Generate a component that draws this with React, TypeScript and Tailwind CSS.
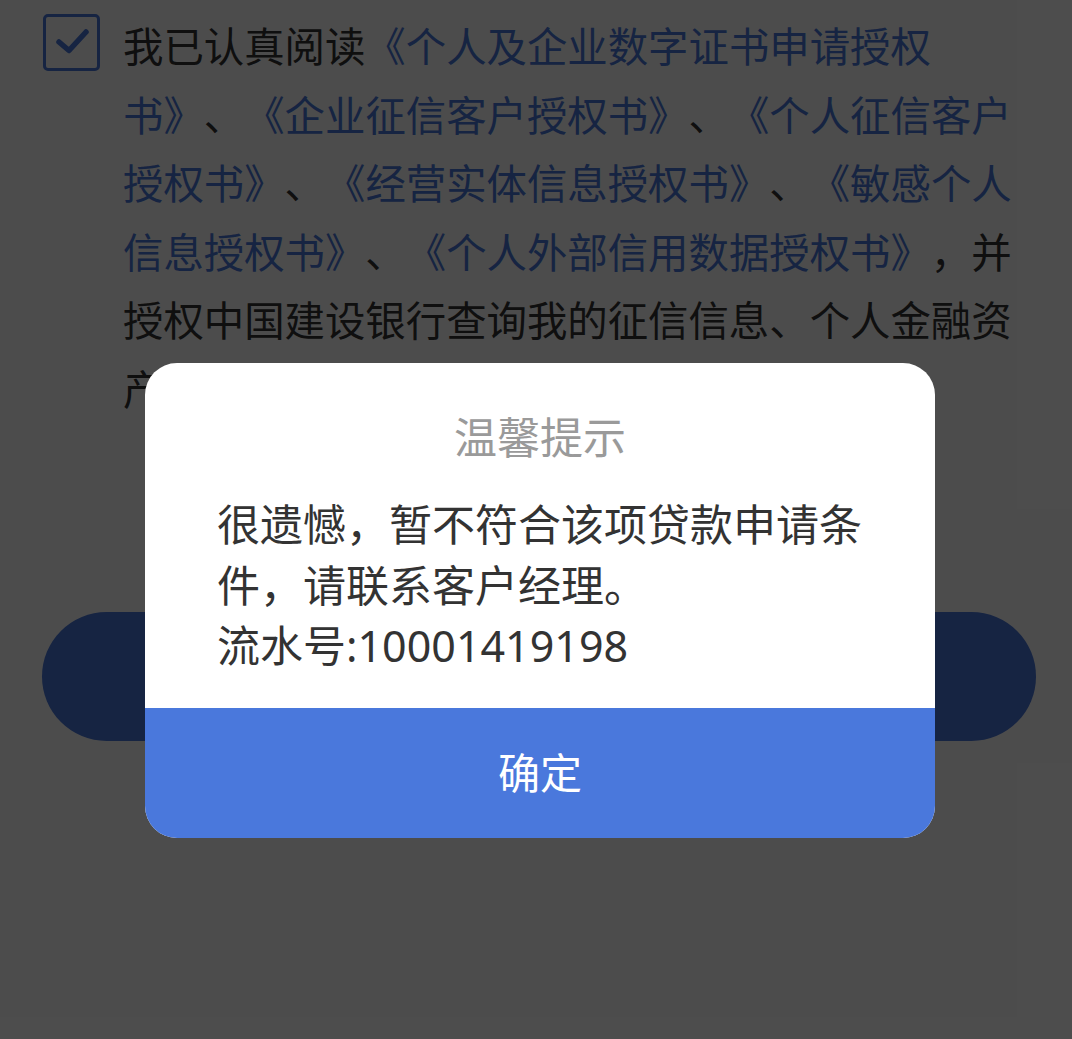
import React from "react";

const links = {
  color: "text-[#4a78dc]",
};

// 背景页：授权协议勾选 + 主按钮
const AgreementPage: React.FC = () => {
  return (
    <div className="pt-[13px]">
      <div className="flex items-start">
        {/* 勾选框 */}
        <div className="ml-[43px] mt-[1px] flex h-[57px] w-[57px] shrink-0 items-center justify-center rounded-[5px] border-[3px] border-[#4a78dc]">
          <svg width="40" height="40" viewBox="0 0 40 40" fill="none">
            <path
              d="M7 19 L17 27.5 L34 9"
              stroke="#4a78dc"
              strokeWidth="5.5"
              strokeLinecap="round"
              strokeLinejoin="round"
            />
          </svg>
        </div>

        <p className="ml-[23px] w-[892px] text-[40.4px] leading-[68.6px] text-[#333] [text-spacing-trim:space-all]">
          我已认真阅读
          <span className={links.color}>《个人及企业数字证书申请授权</span>
          <br />
          <span className={links.color}>书》</span>、
          <span className={links.color}>《企业征信客户授权书》</span>、
          <span className={links.color}>《个人征信客户授权书》</span>、
          <span className={links.color}>《经营实体信息授权书》</span>、
          <span className={links.color}>《敏感个人信息授权书》</span>、
          <span className={links.color}>《个人外部信用数据授权书》</span>
          ，并授权中国建设银行查询我的征信信息、个人金融资产信息。
        </p>
      </div>

      <div className="ml-[42px] mr-[36px] mt-[187px] flex h-[129px] items-center justify-center rounded-full bg-[#4a78dc] text-[42px] text-white">
        提交申请
      </div>
    </div>
  );
};

// 温馨提示弹窗
const NoticeDialog: React.FC = () => {
  return (
    <div className="absolute inset-0 flex justify-center bg-black/70 pl-[8px] pt-[363px]">
      <div className="h-fit w-[790px] overflow-hidden rounded-[32px] bg-white">
        <div className="pt-[44px] text-center text-[43px] leading-[61px] text-[#9a9a9a]">
          温馨提示
        </div>
        <div className="mt-[27px] px-[72px] pb-[31px] text-[43px] leading-[60.5px] text-[#333] [text-spacing-trim:space-all]">
          很遗憾，暂不符合该项贷款申请条件，请联系客户经理。
          <br />
          流水号:10001419198
        </div>
        <button className="flex h-[130px] w-full items-center justify-center bg-[#4a78dc] text-[42px] text-white">
          确定
        </button>
      </div>
    </div>
  );
};

export default function App() {
  return (
    <div
      className="relative h-[1039px] w-full overflow-hidden bg-white"
      style={{ fontFamily: '"Noto Sans", "Noto Sans CJK SC", sans-serif' }}
    >
      <AgreementPage />
      <NoticeDialog />
    </div>
  );
}
